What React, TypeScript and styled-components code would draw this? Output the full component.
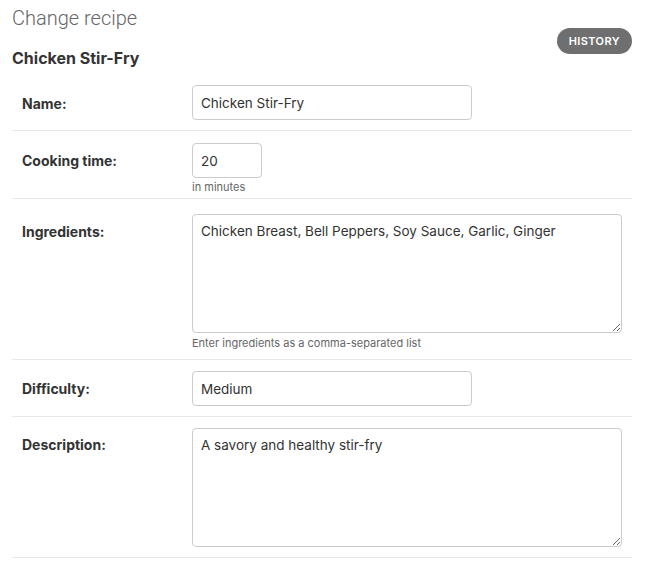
import React from "react";
import styled, { createGlobalStyle } from "styled-components";

const FONT = `Inter, Roboto, "Liberation Sans", sans-serif`;

const Global = createGlobalStyle`
  html, body { margin: 0; padding: 0; background: #fff; }
  body { font-family: ${FONT}; color: #333; }
  * { box-sizing: border-box; }
`;

const Page = styled.div`
  width: 648px;
  padding: 0 16px 0 12px;
`;

const Title = styled.h1`
  margin: 0;
  padding-top: 7px;
  font-family: Roboto, "Liberation Sans", sans-serif;
  font-size: 20px;
  line-height: 22px;
  font-weight: 300;
  color: #666;
`;

const HeaderRow = styled.div`
  display: flex;
  justify-content: space-between;
  align-items: flex-start;
  margin-top: -1px;
`;

const Subtitle = styled.h2`
  margin: 21px 0 0;
  font-size: 16px;
  line-height: 18px;
  font-weight: 700;
  color: #333;
`;

const HistoryButton = styled.a`
  display: inline-flex;
  align-items: center;
  height: 26px;
  padding: 0 12px;
  border-radius: 15px;
  background: #6f6f6f;
  color: #fff;
  font-size: 11px;
  font-weight: 600;
  letter-spacing: 0.4px;
  text-transform: uppercase;
  text-decoration: none;
`;

const Fieldset = styled.div`
  margin-top: 8px;
`;

const Row = styled.div`
  display: flex;
  align-items: flex-start;
  padding: 10px;
  border-bottom: 1px solid #e8e8e8;
`;

const Label = styled.label<{ $top: number }>`
  width: 170px;
  flex: none;
  padding-top: ${(p) => p.$top}px;
  font-size: 14px;
  line-height: 16px;
  font-weight: 700;
  color: #333;
`;

const Field = styled.div`
  display: flex;
  flex-direction: column;
`;

const TextInput = styled.input<{ $w: number; $mt: number }>`
  width: ${(p) => p.$w}px;
  height: 35px;
  margin: ${(p) => p.$mt}px 0 0;
  padding: 5px 8px;
  border: 1px solid #ccc;
  border-radius: 4px;
  font-family: ${FONT};
  font-size: 13.5px;
  color: #333;
  background: #fff;
  outline: none;
`;

const TextArea = styled.textarea<{ $h: number; $mt: number }>`
  width: 430px;
  height: ${(p) => p.$h}px;
  margin: ${(p) => p.$mt}px 0 0;
  padding: 7px 8px;
  border: 1px solid #ccc;
  border-radius: 4px;
  font-family: ${FONT};
  font-size: 13.5px;
  line-height: 18px;
  color: #333;
  background: #fff;
  outline: none;
  resize: both;
  display: block;
`;

const Help = styled.div<{ $mt: number; $mb: number }>`
  margin-top: ${(p) => p.$mt}px;
  margin-bottom: ${(p) => p.$mb}px;
  font-size: 11px;
  line-height: 13px;
  color: #666;
`;

export default function App() {
  return (
    <Page>
      <Global />
      <Title>Change recipe</Title>
      <HeaderRow>
        <Subtitle>Chicken Stir-Fry</Subtitle>
        <HistoryButton href="#">History</HistoryButton>
      </HeaderRow>
      <Fieldset>
        <Row>
          <Label $top={11}>Name:</Label>
          <Field>
            <TextInput $w={280} $mt={0} defaultValue="Chicken Stir-Fry" />
          </Field>
        </Row>
        <Row>
          <Label $top={12}>Cooking time:</Label>
          <Field>
            <TextInput $w={70} $mt={2} defaultValue="20" />
            <Help $mt={3} $mb={-6}>in minutes</Help>
          </Field>
        </Row>
        <Row>
          <Label $top={15}>Ingredients:</Label>
          <Field>
            <TextArea
              $h={119}
              $mt={5}
              defaultValue="Chicken Breast, Bell Peppers, Soy Sauce, Garlic, Ginger"
            />
            <Help $mt={4} $mb={-1}>Enter ingredients as a comma-separated list</Help>
          </Field>
        </Row>
        <Row>
          <Label $top={11}>Difficulty:</Label>
          <Field>
            <TextInput $w={280} $mt={1} defaultValue="Medium" />
          </Field>
        </Row>
        <Row>
          <Label $top={10}>Description:</Label>
          <Field>
            <TextArea $h={119} $mt={1} defaultValue="A savory and healthy stir-fry" />
          </Field>
        </Row>
      </Fieldset>
    </Page>
  );
}
